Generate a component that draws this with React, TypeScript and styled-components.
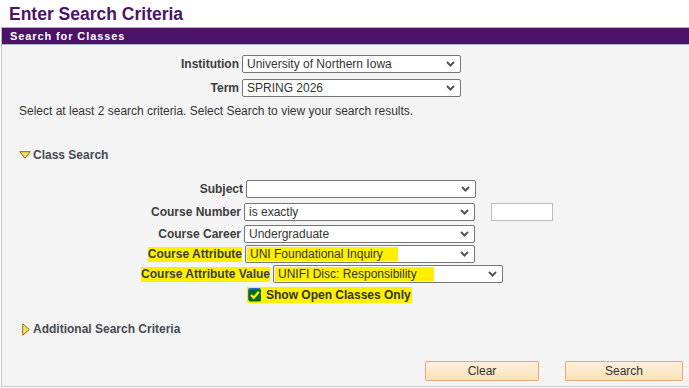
import React from 'react';
import styled, { createGlobalStyle } from 'styled-components';

const Global = createGlobalStyle`
  html, body { margin: 0; padding: 0; background: #fff; }
  body {
    font-family: "Liberation Sans", Arial, sans-serif;
    width: 689px;
    height: 388px;
    overflow: hidden;
  }
`;

const Page = styled.div`
  width: 689px;
  height: 388px;
  display: flex;
  flex-direction: column;
`;

const Title = styled.h1`
  margin: 0;
  height: 25px;
  padding: 2px 0 0 9px;
  font-size: 17.5px;
  line-height: 25px;
  font-weight: bold;
  color: #4b1466;
`;

const HeaderBar = styled.div`
  margin-left: 1px;
  height: 16px;
  border: 1px solid #a9b7cc;
  border-right: none;
  background: #4b1268;
  color: #fff;
  font-size: 11px;
  font-weight: bold;
  letter-spacing: 0.9px;
  line-height: 16px;
  padding-left: 8px;
`;

const Panel = styled.div`
  margin-left: 1px;
  height: 331px;
  padding-top: 10px;
  border-left: 1px solid #c9c9c9;
  border-bottom: 1px solid #c9c9c9;
  background: #f4f4f4;
  display: flex;
  flex-direction: column;
`;

const FieldRow = styled.div<{ $mt: number; $labelEnd: number }>`
  display: grid;
  grid-template-columns: ${(p) => p.$labelEnd - 2}px auto auto;
  justify-content: start;
  column-gap: 3px;
  align-items: center;
  margin-top: ${(p) => p.$mt}px;
  height: 18px;
`;

const Label = styled.span<{ $hl?: boolean }>`
  justify-self: end;
  font-size: 12px;
  font-weight: bold;
  color: #3d3d3d;
  line-height: 15px;
  white-space: nowrap;
  background: ${(p) => (p.$hl ? '#fff000' : 'transparent')};
`;

const SelectBox = styled.div<{ $w: number }>`
  box-sizing: border-box;
  width: ${(p) => p.$w}px;
  height: 18px;
  border: 1px solid #767676;
  border-radius: 2px;
  background: #fff;
  display: flex;
  align-items: center;
  justify-content: space-between;
  padding: 0 5px 0 1px;
  font-size: 12px;
  color: #333;
`;

const SelectText = styled.span<{ $hl?: boolean; $padR?: number }>`
  line-height: 14px;
  padding: 0 ${(p) => p.$padR ?? 0}px 0 3px;
  white-space: nowrap;
  background: ${(p) => (p.$hl ? '#fff000' : 'transparent')};
`;

const TextInput = styled.div`
  box-sizing: border-box;
  width: 62px;
  height: 18px;
  margin-left: 13px;
  border: 1px solid #bdbdbd;
  background: #fff;
`;

const InfoText = styled.p`
  margin: 7px 0 0 17px;
  font-size: 12px;
  line-height: 14px;
  color: #333;
`;

const SectionHead = styled.div<{ $mt: number; $pl: number }>`
  display: flex;
  align-items: center;
  gap: 2px;
  margin-top: ${(p) => p.$mt}px;
  padding-left: ${(p) => p.$pl}px;
  height: 14px;
  font-size: 12px;
  font-weight: bold;
  color: #454a52;
`;

const CheckRow = styled.div`
  display: flex;
  margin: 4px 0 0 245px;
  height: 16px;
`;

const CheckHighlight = styled.label`
  display: flex;
  align-items: center;
  gap: 4px;
  padding: 0 1px 0 1px;
  background: #fff000;
  font-size: 12px;
  font-weight: bold;
  color: #333;
  line-height: 16px;
`;

const ButtonRow = styled.div`
  display: flex;
  justify-content: flex-end;
  gap: 26px;
  margin-top: 25px;
  padding-right: 6px;
`;

const Button = styled.button<{ $w: number }>`
  box-sizing: border-box;
  width: ${(p) => p.$w}px;
  height: 20px;
  padding: 0;
  border: 1px solid #e2ab75;
  border-radius: 2px;
  background: linear-gradient(#fdf0d9, #fae2b9);
  font-family: "Liberation Sans", Arial, sans-serif;
  font-size: 12px;
  color: #333;
`;

const Chevron = () => (
  <svg width="9" height="6" viewBox="0 0 9 6">
    <path d="M1 1 L4.5 4.5 L8 1" fill="none" stroke="#555" strokeWidth="2" />
  </svg>
);

const DownTriangle = () => (
  <svg width="12" height="8" viewBox="0 0 12 8">
    <path d="M0.7 0.7 H11.3 L6 7.3 Z" fill="#f6dd5a" stroke="#7a6a2a" strokeWidth="1" />
  </svg>
);

const RightTriangle = () => (
  <svg width="8" height="13" viewBox="0 0 8 13">
    <path d="M0.7 0.7 L7.3 6.5 L0.7 12.3 Z" fill="#f7df55" stroke="#8a7020" strokeWidth="1" />
  </svg>
);

const CheckIcon = () => (
  <svg width="14" height="14" viewBox="0 0 14 14">
    <rect x="0" y="0" width="13" height="13" rx="2" fill="#1f6fd6" />
    <rect x="1" y="1.5" width="12" height="12" rx="1.5" fill="#0c6a12" />
    <path d="M3 7 L5.8 9.8 L10.8 3.8" fill="none" stroke="#fff000" strokeWidth="2.2" />
  </svg>
);

type SelectProps = { w: number; text: string; hl?: boolean; padR?: number };
const Select = ({ w, text, hl, padR }: SelectProps) => (
  <SelectBox $w={w}>
    <SelectText $hl={hl} $padR={padR}>{text}</SelectText>
    <Chevron />
  </SelectBox>
);

export default function App() {
  return (
    <Page>
      <Global />
      <Title>Enter Search Criteria</Title>
      <HeaderBar>Search for Classes</HeaderBar>
      <Panel>
        <FieldRow $mt={0} $labelEnd={239}>
          <Label>Institution</Label>
          <Select w={219} text="University of Northern Iowa" />
        </FieldRow>
        <FieldRow $mt={6} $labelEnd={239}>
          <Label>Term</Label>
          <Select w={219} text="SPRING 2026" />
        </FieldRow>
        <InfoText>Select at least 2 search criteria. Select Search to view your search results.</InfoText>
        <SectionHead $mt={30} $pl={17}>
          <DownTriangle />
          Class Search
        </SectionHead>
        <FieldRow $mt={18} $labelEnd={243}>
          <Label>Subject</Label>
          <Select w={230} text="" />
        </FieldRow>
        <FieldRow $mt={5} $labelEnd={241}>
          <Label>Course Number</Label>
          <Select w={231} text="is exactly" />
          <TextInput />
        </FieldRow>
        <FieldRow $mt={4} $labelEnd={241}>
          <Label>Course Career</Label>
          <Select w={231} text="Undergraduate" />
        </FieldRow>
        <FieldRow $mt={2} $labelEnd={242}>
          <Label $hl>Course Attribute</Label>
          <Select w={230} text="UNI Foundational Inquiry" hl padR={15} />
        </FieldRow>
        <FieldRow $mt={2} $labelEnd={270}>
          <Label $hl>Course Attribute Value</Label>
          <Select w={230} text="UNIFI Disc: Responsibility" hl padR={17} />
        </FieldRow>
        <CheckRow>
          <CheckHighlight>
            <CheckIcon />
            Show Open Classes Only
          </CheckHighlight>
        </CheckRow>
        <SectionHead $mt={19} $pl={20}>
          <RightTriangle />
          <span style={{ marginLeft: 1 }}>Additional Search Criteria</span>
        </SectionHead>
        <ButtonRow>
          <Button $w={114}>Clear</Button>
          <Button $w={118}>Search</Button>
        </ButtonRow>
      </Panel>
    </Page>
  );
}
